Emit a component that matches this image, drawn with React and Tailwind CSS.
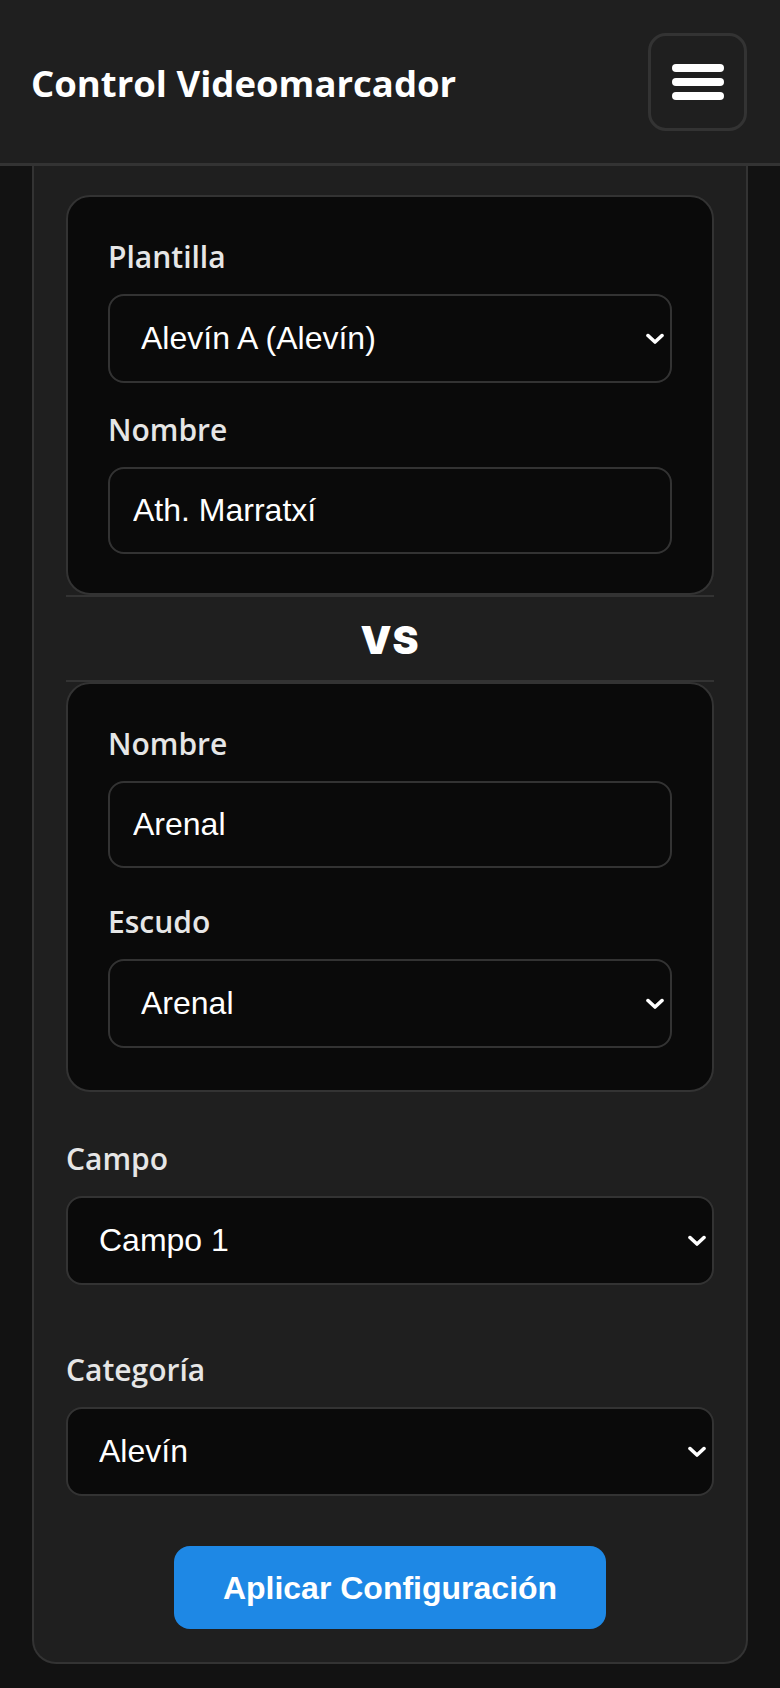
const labelCls = "block h-[36px] leading-[36px] mb-[19px] text-[30px] font-semibold text-[#e6e6e6] [font-family:'Open_Sans','Noto_Sans',sans-serif]"

function Chevron() {
  return (
    <svg className="pointer-events-none absolute right-[8px] top-1/2 -translate-y-1/2" width="18" height="11" viewBox="0 0 18 11" fill="none">
      <polyline points="2,2 9,8.5 16,2" stroke="#ffffff" strokeWidth="3.6" strokeLinecap="round" strokeLinejoin="round" />
    </svg>
  )
}

function Select({ value, options }) {
  return (
    <div className="relative">
      <select
        defaultValue={value}
        className="block w-full h-[89px] appearance-none rounded-[16px] border-2 border-[#333] bg-[#0a0a0a] pl-[31px] pr-[40px] text-[32px] leading-[37px] text-white outline-none [font-family:'Liberation_Sans',Arial,sans-serif]"
      >
        {options.map((o) => (
          <option key={o}>{o}</option>
        ))}
      </select>
      <Chevron />
    </div>
  )
}

function Input({ value }) {
  return (
    <input
      defaultValue={value}
      className="block w-full h-[87px] rounded-[16px] border-2 border-[#333] bg-[#0a0a0a] px-[23px] text-[32px] text-white outline-none [font-family:'Liberation_Sans',Arial,sans-serif]"
    />
  )
}

export default function App() {
  return (
    <div className="min-h-screen bg-[#121212] pb-[25px]">
      <header className="flex h-[166px] items-center justify-between border-b-[3px] border-[#333] bg-[#1f1f1f] pl-[31px] pr-[33px]">
        <h1 className="mt-[4px] text-[36.5px] font-bold text-white [font-family:'Open_Sans','Noto_Sans',sans-serif]">
          Control Videomarcador
        </h1>
        <button className="flex h-[98px] w-[99px] flex-col items-center justify-center gap-[6px] rounded-[18px] border-[3px] border-[#333]">
          <span className="block h-[8px] w-[52px] rounded-full bg-white" />
          <span className="block h-[8px] w-[52px] rounded-full bg-white" />
          <span className="block h-[8px] w-[52px] rounded-full bg-white" />
        </button>
      </header>

      <main className="mx-8 rounded-b-[24px] border-x-2 border-b-2 border-[#333] bg-[#1f1f1f] px-8 pt-[29px] pb-[33px]">
        <section className="rounded-[24px] border-2 border-[#333] bg-[#0a0a0a] px-[40px] pt-[42px] pb-[39px]">
          <label className={labelCls}>Plantilla</label>
          <Select value="Alevín A (Alevín)" options={["Alevín A (Alevín)", "Alevín B (Alevín)", "Infantil A (Infantil)"]} />
          <label className={labelCls + " mt-[29px]"}>Nombre</label>
          <Input value="Ath. Marratxí" />
        </section>

        <div className="flex h-[87px] items-center justify-center border-y-2 border-[#333]">
          <span className="pt-[2px] text-[39px] font-black uppercase leading-none tracking-[1px] text-white [font-family:Inter,sans-serif]">
            vs
          </span>
        </div>

        <section className="rounded-[24px] border-2 border-[#333] bg-[#0a0a0a] px-[40px] pt-[42px] pb-[42px]">
          <label className={labelCls}>Nombre</label>
          <Input value="Arenal" />
          <label className={labelCls + " mt-[36px]"}>Escudo</label>
          <Select value="Arenal" options={["Arenal", "Marratxí", "Sin escudo"]} />
        </section>

        <div className="mt-[49px]">
          <label className={labelCls}>Campo</label>
          <Select value="Campo 1" options={["Campo 1", "Campo 2", "Campo 3"]} />
        </div>

        <div className="mt-[67px]">
          <label className={labelCls}>Categoría</label>
          <Select value="Alevín" options={["Benjamín", "Alevín", "Infantil", "Cadete"]} />
        </div>

        <div className="mt-[50px] flex justify-center">
          <button className="h-[83px] w-[432px] rounded-[16px] bg-[#1e88e5] text-[32px] font-bold text-white [font-family:'Liberation_Sans',Arial,sans-serif]">
            Aplicar Configuración
          </button>
        </div>
      </main>
    </div>
  )
}
